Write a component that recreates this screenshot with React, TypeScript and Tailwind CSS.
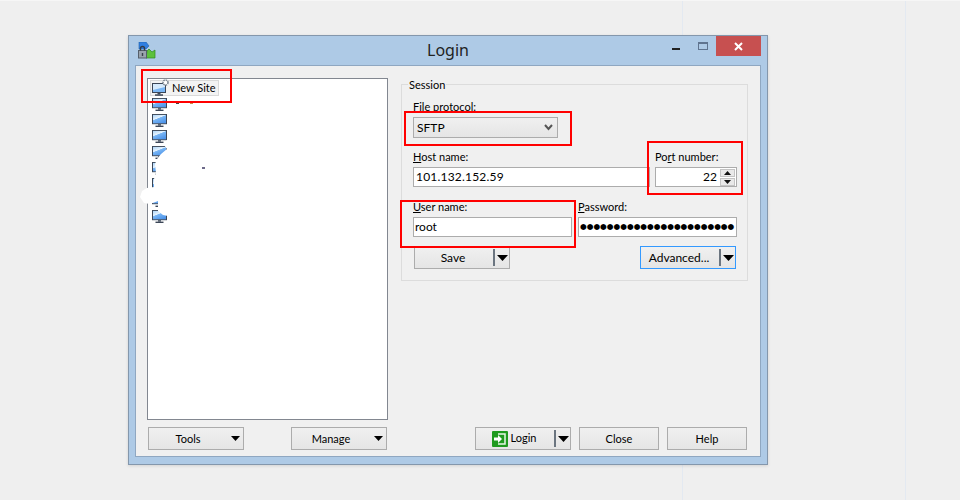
import React from "react";

const font = { fontFamily: 'Lato, "Noto Sans", sans-serif' };

function Monitor() {
  return (
    <svg width="15" height="13" viewBox="0 0 15 14" preserveAspectRatio="none" className="shrink-0">
      <defs>
        <linearGradient id="scr" x1="0" y1="0" x2="0.6" y2="1">
          <stop offset="0" stopColor="#a4d0f7" />
          <stop offset="0.45" stopColor="#e6f3fe" />
          <stop offset="0.5" stopColor="#7ab6f4" />
          <stop offset="1" stopColor="#4d94ea" />
        </linearGradient>
      </defs>
      <rect x="0.5" y="0.5" width="14" height="10" fill="url(#scr)" stroke="#3b4657" />
      <rect x="6" y="11" width="3" height="1.5" fill="#3b4657" />
      <rect x="3.5" y="12.5" width="8" height="1.5" fill="#3b4657" />
    </svg>
  );
}

function NewSiteIcon() {
  return (
    <svg width="18" height="17" viewBox="0 0 18 17" className="shrink-0">
      <rect x="0.5" y="4.5" width="13" height="9" fill="#7ab6f4" stroke="#3b4657" />
      <path d="M1 5h12v3L1 11z" fill="#d6eafc" />
      <rect x="5.5" y="14" width="3" height="1.5" fill="#3b4657" />
      <rect x="3" y="15.3" width="8" height="1.5" fill="#3b4657" />
      <circle cx="13.5" cy="3.5" r="2.5" fill="#fff" stroke="#7f8994" strokeWidth="1.6" strokeDasharray="1.6 0.7" />
    </svg>
  );
}

function AppIcon() {
  return (
    <svg width="18" height="18" viewBox="0 0 18 18">
      <path d="M1 0h7l3 4-3 3H1z" fill="#2f7fe0" stroke="#1e5ea8" strokeWidth="0.6" />
      <path d="M9 9l2-2 3 3 3-2v8H8z" fill="#5cc13c" stroke="#2f8a1e" strokeWidth="0.7" />
      <rect x="0.5" y="8.5" width="8" height="7.5" fill="#9aa3ad" stroke="#555f6b" />
      <path d="M2.500 8.500V6.500a2 2 0 0 1 4 0v2" fill="none" stroke="#333c47" strokeWidth="1.4" />
      <rect x="3.8" y="11" width="1.4" height="3" fill="#3a424c" />
    </svg>
  );
}

function Caret({ w = 9, h = 5 }: { w?: number; h?: number }) {
  return (
    <svg width={w} height={h} viewBox="0 0 9 5" preserveAspectRatio="none" className="shrink-0">
      <path d="M0 0h9L4.500 5z" fill="#000" />
    </svg>
  );
}

function LoginIcon() {
  return (
    <svg width="16" height="16" viewBox="0 0 16 16" className="shrink-0">
      <rect width="16" height="16" rx="1" fill="#1f9a1f" />
      <path d="M6 3h7v10H6" fill="none" stroke="#e9f7e9" strokeWidth="1.5" />
      <path d="M2 6.500h4V4l4 4-4 4V9.500H2z" fill="#fff" />
    </svg>
  );
}

const btn =
  "flex items-center border bg-gradient-to-b from-[#f0f0f0] to-[#e5e5e5] text-black h-[23px]";

function SplitButton({ label, icon, accent, big }: { label: string; icon?: React.ReactNode; accent?: boolean; big?: boolean }) {
  return (
    <div className={`${btn} w-[96px] ${big ? "text-[12px]" : "text-[11px]"} ${accent ? "border-[#3399ff]" : "border-[#acacac]"}`}>
      <div className="flex-1 flex items-center justify-center gap-[3px] pr-[2px]">
        {icon}
        <span>{label}</span>
      </div>
      <div className="w-[2px] h-[17px] bg-[#6b7580]" />
      <div className="w-[14px] flex justify-center">
        <Caret w={11} h={6} />
      </div>
    </div>
  );
}

function DropButton({ label }: { label: string }) {
  return (
    <div className={`${btn} border-[#acacac] w-[96px] text-[11px]`}>
      <div className="w-[78px] text-center pt-px">{label}</div>
      <div className="flex-1 flex justify-center pl-[1px] pb-[1px]">
        <Caret />
      </div>
    </div>
  );
}

function Label({ first, rest, pre }: { first: string; rest: string; pre?: string }) {
  return (
    <div className="h-[19px] flex items-center text-[11px] text-black">
      <span>
        {pre}
        <u className="underline-offset-1">{first}</u>
        {rest}
      </span>
    </div>
  );
}

function Field({ children, className = "" }: { children?: React.ReactNode; className?: string }) {
  return (
    <div className={`h-[20px] border border-[#acacac] bg-white flex items-center text-[12px] text-black ${className}`}>
      {children}
    </div>
  );
}

export default function App() {
  return (
    <div className="relative w-[960px] h-[500px] bg-[#efefef] overflow-hidden pt-[35px] pl-[128px] border-t border-[#f6f6f6]" style={font}>
      <div className="absolute left-[682px] top-0 w-px h-full bg-[#e3e9f1]" />
      <div className="absolute left-[905px] top-0 w-px h-full bg-[#e3e9f1]" />

      <div className="relative -mt-px w-[640px] h-[430px] border border-[#8497ac] bg-[#aecae6] flex flex-col shadow-[0_1px_3px_rgba(0,0,0,0.12)]">
        {/* title bar */}
        <div className="relative h-[29px] shrink-0 flex items-center">
          <div className="pl-[9px] flex items-center"><AppIcon /></div>
          <div className="absolute inset-x-0 top-[3px] text-center text-[16px] leading-[22px] text-[#222]" style={{ fontFamily: '"Noto Sans", sans-serif' }}>Login</div>
          <div className="ml-auto flex items-start self-start mr-[6px]">
            <div className="w-[8px] h-[2px] bg-[#222] mt-[12px] mr-[18px]" />
            <div className="w-[10px] h-[8px] border border-[#60748f] border-t-2 mt-[6px] mr-[8px]" />
            <div className="w-[45px] h-[20px] bg-[#c75050] flex items-center justify-center">
              <svg width="9" height="9" viewBox="0 0 9 9">
                <path d="M1 1l7 7M8 1L1 8" stroke="#fff" strokeWidth="2" />
              </svg>
            </div>
          </div>
        </div>

        {/* client */}
        <div className="flex-1 mx-[6px] mb-[7px] border border-[#8fa7c1] bg-[#f0f0f0] flex pl-[11px] pt-[12px] pb-[6px]">
          {/* left */}
          <div className="w-[241px] shrink-0 flex flex-col gap-[7px]">
            <div className="h-[342px] border border-[#828790] bg-white flex flex-col pt-[1px] pl-[2px] text-[11px]">
              <div className="w-[69px] h-[16px] border border-[#d9d9d9] bg-[#f3f3f3] flex items-center text-black whitespace-nowrap">
                <div className="pl-[1px] -mt-[2px]"><NewSiteIcon /></div>
                <span className="ml-[2px] leading-none -mt-[1px]">New Site</span>
              </div>
              {[0, 1, 2, 3, 4, 5, 6, 7].map((i) => (
                <div key={i} className="h-[16px] flex items-center pl-[2px] pt-[1px]">
                  <Monitor />
                </div>
              ))}
            </div>
            <div className="flex justify-between px-[1px]">
              <DropButton label="Tools" />
              <DropButton label="Manage" />
            </div>
          </div>

          {/* right */}
          <div className="ml-[13px] w-[347px] shrink-0 flex flex-col">
            <div className="relative mt-[6px] h-[197px] border border-[#dcdcdc] pl-[11px] pt-[13px]">
              <div className="absolute left-[6px] -top-[8px] px-[1px] bg-[#f0f0f0] text-[11px] leading-[16px] text-black">Session</div>
              <Label first="F" rest="ile protocol:" />
              <div className="w-[145px] h-[21px] border border-[#acacac] bg-gradient-to-b from-[#f0f0f0] to-[#e5e5e5] flex items-center justify-between pl-[3px] pr-[4px] text-[12px] text-black">
                <span>SFTP</span>
                <svg width="9" height="7" viewBox="0 0 9 7"><path d="M1 1l3.500 4L8 1" fill="none" stroke="#555" strokeWidth="2" /></svg>
              </div>

              <div className="flex gap-[5px] mt-[10px]">
                <div className="w-[237px]">
                  <Label first="H" rest="ost name:" />
                  <Field className="pl-[2px] text-[11px] tracking-[0.2px]">101.132.152.59</Field>
                </div>
                <div className="w-[82px]">
                  <Label pre="Po" first="r" rest="t number:" />
                  <Field className="justify-end">
                    <span className="mr-[3px]">22</span>
                    <div className="flex flex-col gap-px mr-px">
                      <div className="w-[15px] h-[8px] bg-[#e9e9e9] border border-[#c4c4c4] flex items-center justify-center">
                        <svg width="7" height="4" viewBox="0 0 7 4"><path d="M3.500 0L7 4H0z" fill="#111" /></svg>
                      </div>
                      <div className="w-[15px] h-[8px] bg-[#e9e9e9] border border-[#c4c4c4] flex items-center justify-center">
                        <svg width="7" height="4" viewBox="0 0 7 4"><path d="M0 0h7L3.500 4z" fill="#111" /></svg>
                      </div>
                    </div>
                  </Field>
                </div>
              </div>

              <div className="flex gap-[6px] mt-[11px]">
                <div className="w-[159px]">
                  <Label first="U" rest="ser name:" />
                  <Field className="pl-[1px]">root</Field>
                </div>
                <div className="w-[159px]">
                  <Label first="P" rest="assword:" />
                  <Field className="pl-[1px]">
                    <span className="text-[7.7px] leading-none text-black whitespace-nowrap" style={{ fontFamily: '"DejaVu Sans", sans-serif' }}>
                      {"●".repeat(23)}
                    </span>
                  </Field>
                </div>
              </div>

              <div className="flex justify-between items-end mt-[9px] pl-[1px] w-[323px]">
                <SplitButton label="Save" big />
                <SplitButton label="Advanced..." accent big />
              </div>
            </div>

            <div className="mt-auto flex justify-end gap-[8px] pr-[1px]">
              <SplitButton label="Login" icon={<LoginIcon />} />
              <div className={`${btn} border-[#acacac] w-[80px] justify-center text-[11px] pt-px`}>Close</div>
              <div className={`${btn} border-[#acacac] w-[80px] justify-center text-[11px] pt-px`}>Help</div>
            </div>
          </div>
        </div>
      </div>

      {/* white retouching over the site list */}
      <svg className="absolute left-0 top-0 pointer-events-none" width="960" height="500" viewBox="0 0 960 500">
        <path
          d="M173 102H290V215H168L163 214L158 210L158 200L150 203L144 202L140 196L142 190L147 187L154 186L154 178L156 172L155 163L157 158L161 153L167 148L163 143L167 139L173 137z"
          fill="#fff"
        />
        <rect x="202" y="166" width="3" height="2" fill="#6d6a8a" />
        <rect x="176" y="102" width="3" height="1" fill="#444" />
        <rect x="190" y="102" width="3" height="1" fill="#c98a4a" />
      </svg>

      {/* red annotation boxes */}
      <div className="absolute left-[141px] top-[68px] w-[91px] h-[34px] border-2 border-[#f00]" />
      <div className="absolute left-[404px] top-[110px] w-[168px] h-[35px] border-2 border-[#f00]" />
      <div className="absolute left-[647px] top-[140px] w-[96px] h-[54px] border-2 border-[#f00]" />
      <div className="absolute left-[400px] top-[199px] w-[176px] h-[48px] border-2 border-[#f00]" />
    </div>
  );
}
